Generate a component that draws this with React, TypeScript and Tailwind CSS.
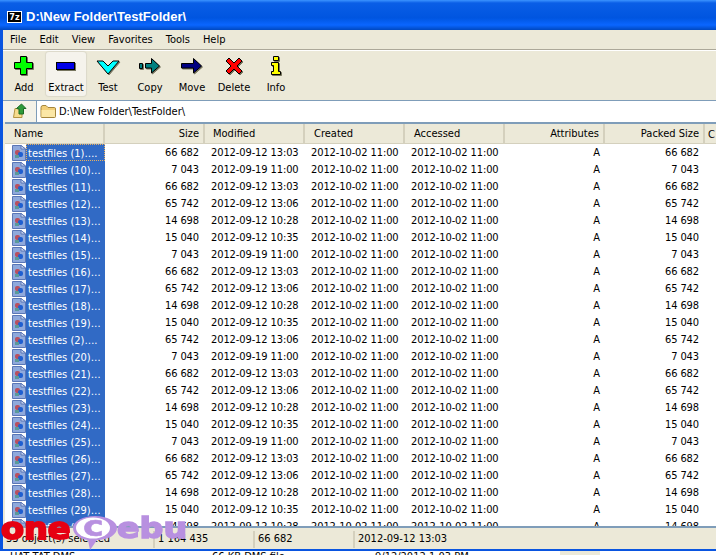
const font = { fontFamily: '"DejaVu Sans Condensed", "Liberation Sans", Arial, sans-serif' };

const modified: Record<string, string> = {
  "66 682": "2012-09-12 13:03",
  "65 742": "2012-09-12 13:06",
  "14 698": "2012-09-12 10:28",
  "15 040": "2012-09-12 10:35",
  "7 043": "2012-09-19 11:00",
};

const rows: [string, string][] = [
  ["1", "66 682"], ["10", "7 043"], ["11", "66 682"], ["12", "65 742"], ["13", "14 698"],
  ["14", "15 040"], ["15", "7 043"], ["16", "66 682"], ["17", "65 742"], ["18", "14 698"],
  ["19", "15 040"], ["2", "65 742"], ["20", "7 043"], ["21", "66 682"], ["22", "65 742"],
  ["23", "14 698"], ["24", "15 040"], ["25", "7 043"], ["26", "66 682"], ["27", "65 742"],
  ["28", "14 698"], ["29", "15 040"], ["3", "14 698"],
];

function FileIcon() {
  return (
    <svg width="14" height="16" viewBox="0 0 14 16" className="shrink-0">
      <path d="M.5 .5H9L13.500 4V15.500H.5Z" fill="#8fa9dc" stroke="#5a76b6" />
      <path d="M9 .5V4H13.500Z" fill="#d5e0f5" stroke="#5a76b6" />
      <rect x="3" y="5" width="5" height="5" rx="2" fill="#b9505e" />
      <rect x="6" y="7" width="5" height="5" rx="2" fill="#1f5fd0" />
      <rect x="3" y="10" width="4" height="3" fill="#5a9a9a" />
    </svg>
  );
}

function FolderIcon() {
  return (
    <svg width="17" height="15" viewBox="0 0 17 15">
      <path d="M1 3.500Q1 1.500 3 1.500H6L8 3.500H14.500Q15.500 3.500 15.500 5V12.500Q15.500 13.500 14.500 13.500H2Q1 13.500 1 12.500Z" fill="#f3cf78" stroke="#a5863c" />
      <path d="M1.500 6H15V12.500Q15 13 14.500 13H2Q1.500 13 1.500 12.500Z" fill="#fbe7a6" />
    </svg>
  );
}

function ToolButton({ label, active, children }: { label: string; active?: boolean; children: React.ReactNode }) {
  return (
    <div className="w-[42px] h-[44px] shrink-0 px-[1px]">
      <div className={`h-full flex flex-col items-center pt-[2px] rounded-[3px] ${active ? "bg-[#f5f3ec] shadow-[0_0_1px_1px_#dcd9ca]" : ""}`}>
        <div className="h-[24px] flex items-center justify-center">{children}</div>
        <span className="mt-[3px] text-[11px] leading-[14px] text-black whitespace-nowrap">{label}</span>
      </div>
    </div>
  );
}

const shadow = { filter: "drop-shadow(1px 1px 0 #77755f)" };

function Header({ right, pad, children }: { right?: boolean; pad?: string; children: React.ReactNode }) {
  return (
    <div className={`w-[100px] shrink-0 h-[19px] pt-[2px] flex items-center border-r-2 border-[#d4d0bd] ${right ? "justify-end pr-[4px]" : pad ?? "pl-[9px]"}`}>
      {children}
    </div>
  );
}

function Watermark() {
  return (
    <div className="absolute left-0 top-[515px] w-[190px] h-[40px] pointer-events-none" style={{ fontFamily: '"DejaVu Sans", sans-serif' }}>
      <span className="absolute left-[1px] top-[-7px] origin-left scale-x-[1.08] text-[31px] leading-[40px] font-bold text-[#e60012] [-webkit-text-stroke:2px_#e60012]">one</span>
      <svg width="48" height="38" viewBox="0 0 48 38" className="absolute left-[71px] top-0">
        <path d="M24 1C36 1 46 6 46 13C46 20 37 25 26 25L19 35L17 25C8 24 2 19 2 13C2 6 12 1 24 1Z" fill="#b890e0" />
        <ellipse cx="22" cy="13" rx="17" ry="10.500" fill="#fff" />
      </svg>
      <span className="absolute left-[83px] top-[-8px] origin-left scale-x-[1.25] text-[28px] leading-[40px] font-bold text-[#b890e0] [-webkit-text-stroke:0.5px_#b890e0]">c</span>
      <span className="absolute left-[117px] top-[-7px] origin-left scale-x-[1.15] text-[29px] leading-[40px] font-bold text-[#b890e0] [-webkit-text-stroke:1.5px_#b890e0]">ebu</span>
    </div>
  );
}

export default function App() {
  return (
    <div className="relative w-[716px] h-[555px] overflow-hidden bg-white text-[11px] text-black flex flex-col" style={font}>
      <div className="h-[30px] shrink-0 bg-[linear-gradient(#3c94ff_0px,#0a5ee6_3px,#0055e0_18px,#0a66ff_25px,#0048c0_30px)] flex items-center pl-[7px] gap-[4px] pt-[3px]">
        <div className="w-[15px] h-[12px] bg-black border border-white text-white text-[9px] leading-[10px] font-bold text-center">7z</div>
        <span className="text-white text-[13px] font-bold" style={{ fontFamily: '"Liberation Sans", sans-serif' }}>D:\New Folder\TestFolder\</span>
      </div>
      <div className="flex-1 min-h-0 flex flex-col border-l-[3px] border-[#0a55e0] bg-[#ece9d8]">
        <div className="h-[20px] shrink-0 flex items-center pl-[7px] pt-[2px] gap-[13px] border-b border-[#aca899]">
          <span>File</span><span>Edit</span><span>View</span><span>Favorites</span><span>Tools</span><span>Help</span>
        </div>
        <div className="h-[50px] shrink-0 flex items-start pt-[1px] border-t border-white">
          <ToolButton label="Add">
            <svg width="20" height="20" viewBox="0 0 20 20" style={shadow}><path d="M6.500 .5h6v6h6v6h-6v6h-6v-6h-6v-6h6z" fill="#00ff00" stroke="#000" /></svg>
          </ToolButton>
          <ToolButton label="Extract" active>
            <svg width="20" height="10" viewBox="0 0 20 10" style={shadow}><rect x=".5" y="1.500" width="18" height="7" fill="#0000e8" stroke="#000" /></svg>
          </ToolButton>
          <ToolButton label="Test">
            <svg width="24" height="16" viewBox="0 0 24 16" className="mt-[3px]" style={shadow}><path d="M1 1h6l5 5 5-5h6L12 14z" fill="#00ffff" stroke="#000" /></svg>
          </ToolButton>
          <ToolButton label="Copy">
            <svg width="22" height="16" viewBox="0 0 22 16" style={shadow}><path d="M.5 5.500h3v5h-3zM6.500 5.500h6v-5l8 7.500-8 7v-5h-6z" fill="#008080" stroke="#000" /></svg>
          </ToolButton>
          <ToolButton label="Move">
            <svg width="22" height="16" viewBox="0 0 22 16" style={shadow}><path d="M.5 5.500h12v-5l8 7.500-8 7v-5h-12z" fill="#000080" stroke="#000" /></svg>
          </ToolButton>
          <ToolButton label="Delete">
            <svg width="18" height="18" viewBox="0 0 18 18" style={shadow}><path d="M1 4l3-3 5 5 5-5 3 3-5 5 5 5-3 3-5-5-5 5-3-3 5-5z" fill="#ff0000" stroke="#000" /></svg>
          </ToolButton>
          <ToolButton label="Info">
            <svg width="12" height="20" viewBox="0 0 12 20" style={shadow}><path d="M3.500 .5h5v4h-5zM1.500 6.500h7v9h2v3h-9v-3h2v-6h-2z" fill="#ffff00" stroke="#000" /></svg>
          </ToolButton>
        </div>
        <div className="h-[22px] shrink-0 flex border-t border-[#7f9db9]">
          <div className="w-[33px] shrink-0 bg-[#f4f2e8] flex items-center justify-center">
            <svg width="16" height="17" viewBox="0 0 16 17">
              <path d="M3 5.500h7v9H1.500z" fill="#f6dc8c" stroke="#b39443" />
              <path d="M9.500 1l4.500 4.500h-2.500V11H7V6L4.500 5.500z" fill="#2c9a3a" stroke="#1a6a25" />
            </svg>
          </div>
          <div className="w-px shrink-0 bg-[#7f9db9]" />
          <div className="flex-1 bg-white flex items-center pl-[3px] gap-[2px]">
            <FolderIcon />
            <span className="pt-[1px]">D:\New Folder\TestFolder\</span>
          </div>
        </div>
        <div className="flex-1 min-h-0 ml-[2px] flex flex-col border-t-2 border-[#7f9db9] bg-white">
          <div className="h-[20px] shrink-0 flex bg-[#ece9d8] border-b border-[#d4d0bd] whitespace-nowrap">
            <Header>Name</Header>
            <Header right>Size</Header>
            <Header pad="pl-[8px]">Modified</Header>
            <Header>Created</Header>
            <Header>Accessed</Header>
            <Header right>Attributes</Header>
            <Header right>Packed Size</Header>
            <div className="pl-[3px] leading-[21px]">C</div>
          </div>
          <div className="flex-1 min-h-0 overflow-hidden tracking-[-0.1px]">
            {rows.map(([n, size], i) => (
              <div key={n} className="h-[17px] flex items-center whitespace-nowrap">
                <div className="w-[100px] shrink-0 flex items-center h-full pl-[7px]">
                  <FileIcon />
                  <span className={`flex-1 h-full leading-[19px] bg-[#316ac5] text-white pl-[2px] tracking-normal ${i === 0 ? "outline-1 -outline-offset-1 outline-dotted outline-[#e8b060]" : ""}`}>
                    testfiles ({n}){n.length === 1 ? "…." : "…"}
                  </span>
                </div>
                <div className="w-[100px] shrink-0 text-right pr-[6px] pt-[2px]">{size}</div>
                <div className="w-[100px] shrink-0 pl-[6px] pt-[2px]">{modified[size]}</div>
                <div className="w-[100px] shrink-0 pl-[6px] pt-[2px]">2012-10-02 11:00</div>
                <div className="w-[100px] shrink-0 pl-[6px] pt-[2px]">2012-10-02 11:00</div>
                <div className="w-[100px] shrink-0 text-right pr-[5px] pt-[2px]">A</div>
                <div className="w-[100px] shrink-0 text-right pr-[6px] pt-[2px]">{size}</div>
              </div>
            ))}
          </div>
        </div>
        <div className="h-[23px] shrink-0 flex items-center pt-[2px] ml-[1px] border-t-2 border-[#7f9db9] whitespace-nowrap">
          <div className="w-[149px] pl-[2px]">33 object(s) selected</div>
          <div className="w-[100px] pl-[3px] border-l-2 border-[#d4d0bd]">1 164 435</div>
          <div className="w-[100px] pl-[3px] border-l-2 border-[#d4d0bd]">66 682</div>
          <div className="pl-[3px] border-l-2 border-[#d4d0bd]">2012-09-12 13:03</div>
        </div>
      </div>
      <div className="h-[2px] shrink-0 bg-[#0a55e0]" />
      <div className="h-[4px] shrink-0 flex overflow-hidden bg-white leading-[12px] whitespace-nowrap">
        <span className="w-[212px] shrink-0 pl-[10px]">HAT TAT DMS</span>
        <span className="w-[163px] shrink-0">66 KB DMS file</span>
        <span className="w-[185px] shrink-0">9/12/2012 1:03 PM</span>
        <span className="w-[40px] shrink-0 bg-[#ece9d8]" />
      </div>
      <Watermark />
    </div>
  );
}
